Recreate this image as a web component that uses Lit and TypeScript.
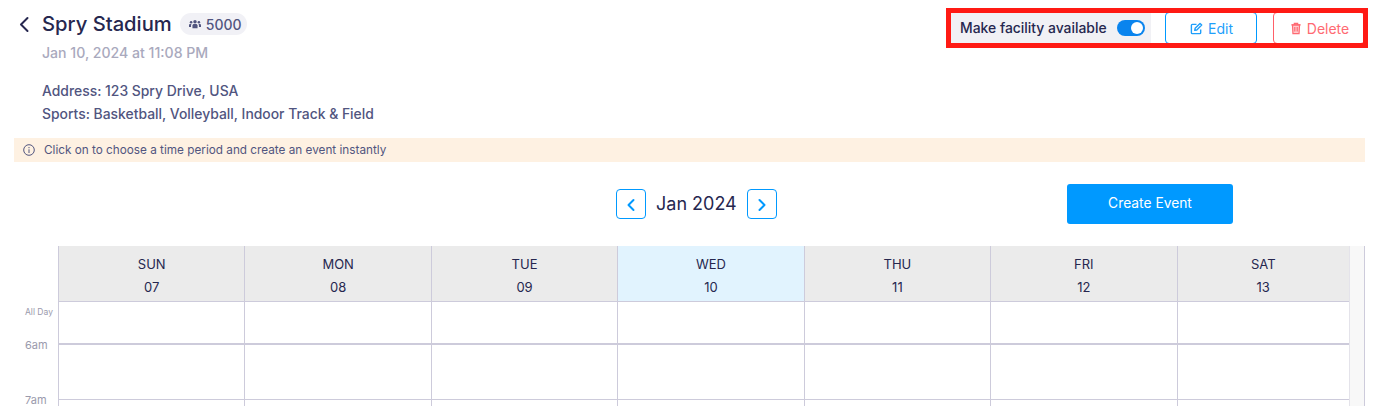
import { LitElement, html, css, svg } from "lit";
import { customElement } from "lit/decorators.js";

const days = [
  ["SUN", "07"], ["MON", "08"], ["TUE", "09"], ["WED", "10"],
  ["THU", "11"], ["FRI", "12"], ["SAT", "13"],
];

const chevron = (d: string, w = 2) => svg`<path d=${d} fill="none" stroke="currentColor" stroke-width=${w} stroke-linecap="round" stroke-linejoin="round"/>`;

@customElement("app-root")
export class AppRoot extends LitElement {
  static styles = css`
    :host { display: block; position: relative; width: 1397px; height: 406px; overflow: hidden; background: #fff;
      font-family: "Inter", "Noto Sans", sans-serif; color: #26274f; }
    * { box-sizing: border-box; }
    .page { padding: 13px 32px 0 14px; display: flex; flex-direction: column; }
    .top { display: flex; justify-content: space-between; align-items: flex-start; height: 125px; }
    .left { display: flex; flex-direction: column; }
    .title-row { display: flex; align-items: center; height: 22px; }
    .back { width: 28px; height: 22px; color: #26274f; display: flex; padding-left: 4px; }
    h1 { margin: 0; font-size: 20.2px; font-weight: 500; line-height: 22px; letter-spacing: 0; }
    .badge { margin-left: 8px; height: 22px; width: 67px; border-radius: 11px; background: #f1f1f6; display: flex; align-items: center;
      padding-left: 9px; gap: 5px; font-size: 14px; font-weight: 500; color: #51557f; }
    .date { margin: 9px 0 0 28px; font-size: 14.1px; line-height: 17px; font-weight: 500; color: #a9a9bd; }
    .meta { margin: 19px 0 0 28px; font-size: 13.9px; line-height: 23px; font-weight: 500; color: #51557f; }
    .actions { display: flex; align-items: center; height: 30px; }
    .toggle-wrap { width: 200px; height: 30px; background: #f1f1f5; display: flex; align-items: center; justify-content: space-between;
      padding: 0 6px 0 9px; font-size: 13.9px; font-weight: 500; color: #26274f; }
    .switch { width: 28px; height: 16px; border-radius: 8px; background: #0a84ee; display: flex; justify-content: flex-end; padding: 2px; }
    .knob { width: 12px; height: 12px; border-radius: 50%; background: #fff; }
    .btn { width: 92px; height: 32px; border-radius: 4px; border: 1px solid #0099ff; background: #fff; display: flex; align-items: center;
      justify-content: center; gap: 5px; font-size: 14px; color: #1f9ffb; font-family: inherit; padding: 0 0 0 1px; }
    .edit { margin-left: 14px; }
    .del { margin-left: 16px; border-color: #ff6069; color: #ff6a72; }
    .banner { height: 24px; background: #fef1e2; display: flex; align-items: center; gap: 9px; padding-left: 9px; font-size: 11.75px; color: #51557f; }
    .toolbar { height: 84px; display: grid; grid-template-columns: 602px auto 1fr; align-items: start; }
    .nav { display: flex; align-items: center; gap: 10px; margin-top: 27px; font-size: 18px; color: #26274f; }
    .label { margin-top: -1px; }
    .nav-btn { width: 30px; height: 30px; border: 1px solid #0099ff; border-radius: 4px; background: #fff; color: #0099ff; padding: 1px 0 0; display: flex; align-items: center; justify-content: center; }
    .create { width: 166px; height: 40px; justify-self: end; margin: 22px 132px 0 0; background: #0099ff; color: #fff; border: 0; border-radius: 3px; padding: 0 0 2px; font: 13.8px "Inter", sans-serif; }
    .cal { display: grid; grid-template-columns: 44px repeat(6, 186.43px) 172.4px 1fr; grid-template-rows: 56px 43px 55px 40px; }
    .head { background: #ebebeb; border-left: 1px solid #cdcbdb; border-bottom: 1px solid #cdcbdb; display: flex; flex-direction: column; align-items: center; padding-top: 7px; font-size: 13px; line-height: 23px; color: #26274f; }
    .head.today { background: #e1f3fe; }
    .cell { border-left: 1px solid #cdcbdb; border-bottom: 1px solid #cdcbdb; }
    .cell.thick { border-bottom-width: 2px; }
    .gut { font-size: 11px; color: #9a9aac; padding-left: 11px; display: flex; flex-direction: column; justify-content: space-between; }
    .gut .hour { margin-bottom: -7px; line-height: 14px; margin-top: auto; }
    .gut .all { font-size: 8.5px; line-height: 12px; margin-top: 4px; }
    .bar { background: #f8f8f8; border-left: 1px solid #e4e3ea; border-right: 1px solid #cdcbdb; }
    .mark { position: absolute; left: 946px; top: 8px; width: 422px; height: 40px; border: 5px solid #ff1a14; pointer-events: none; }
  `;

  render() {
    return html`
      <div class="page">
        <div class="top">
          <div class="left">
            <div class="title-row">
              <span class="back"><svg width="14" height="22" viewBox="0 0 14 22">${chevron("M9.500 5 3 11.500l6.500 6.500")}</svg></span>
              <h1>Spry Stadium</h1>
              <span class="badge">
                <svg width="12" height="10" viewBox="0 0 16 13" fill="#51557f"><circle cx="8" cy="3.400" r="2.300"/><circle cx="2.800" cy="4.200" r="1.700"/><circle cx="13.200" cy="4.200" r="1.700"/><path d="M4.600 12V8.600C4.600 7.200 5.600 6.400 7 6.400h2c1.400 0 2.400.8 2.400 2.200V12Z"/><path d="M0 10.400V8.200c0-1 .7-1.700 1.700-1.700h1.600c-.4.6-.6 1.300-.6 2v1.900ZM16 10.400V8.200c0-1-.7-1.700-1.700-1.700h-1.600c.4.6.6 1.300.6 2v1.900Z"/></svg>
                5000
              </span>
            </div>
            <div class="date">Jan 10, 2024 at 11:08 PM</div>
            <div class="meta">Address: 123 Spry Drive, USA<br />Sports: Basketball, Volleyball, Indoor Track &amp; Field</div>
          </div>
          <div class="actions">
            <div class="toggle-wrap">Make facility available<span class="switch"><span class="knob"></span></span></div>
            <button class="btn edit">
              <svg width="13" height="13" viewBox="0 0 14 14" fill="none" stroke="currentColor" stroke-width="1.500" stroke-linejoin="round"><path d="M11.500 8v3.500c0 .6-.4 1-1 1h-8c-.6 0-1-.4-1-1v-8c0-.6.4-1 1-1h4.500"/><path d="M5.500 6.800 10.800 1.500l1.800 1.800-5.300 5.300-2.200.4Z"/></svg>
              Edit
            </button>
            <button class="btn del">
              <svg width="12" height="13" viewBox="0 0 12 14" stroke="currentColor" stroke-width="1.300"><path d="M2.200 3.200l.5 9.300h6.600l.5-9.300Z" fill="currentColor" fill-opacity=".35"/><path fill="none" d="M1 3.200h10M4.200 3V1.400h3.600V3M4.700 5.500v4.800M7.300 5.500v4.800"/></svg>
              Delete
            </button>
          </div>
        </div>
        <div class="banner">
          <svg width="12" height="12" viewBox="0 0 12 12" fill="none" stroke="#51557f" stroke-width="1"><circle cx="6" cy="6" r="5.300"/><path d="M6 5.300V9M6 3v1.200"/></svg>
          Click on to choose a time period and create an event instantly
        </div>
        <div class="toolbar">
          <span></span>
          <div class="nav">
            <button class="nav-btn"><svg width="14" height="14" viewBox="0 0 14 14">${chevron("M9.500 2 4.500 7l5 5", 2)}</svg></button>
            <span class="label">Jan 2024</span>
            <button class="nav-btn"><svg width="14" height="14" viewBox="0 0 14 14">${chevron("M4.500 2l5 5-5 5", 2)}</svg></button>
          </div>
          <button class="create">Create Event</button>
        </div>
        <div class="cal">
          <div></div>
          ${days.map(([d, n]) => html`<div class="head ${d === "WED" ? "today" : ""}"><span>${d}</span><span>${n}</span></div>`)}
          <div class="bar" style="grid-row: 1 / 5; grid-column: 9"></div>
          <div class="gut"><span class="all">All Day</span><span class="hour">6am</span></div>
          ${days.map(() => html`<div class="cell thick"></div>`)}
          <div class="gut"><span class="hour">7am</span></div>
          ${days.map(() => html`<div class="cell"></div>`)}
          <div></div>
          ${days.map(() => html`<div class="cell"></div>`)}
        </div>
      </div>
      <div class="mark"></div>
    `;
  }
}
